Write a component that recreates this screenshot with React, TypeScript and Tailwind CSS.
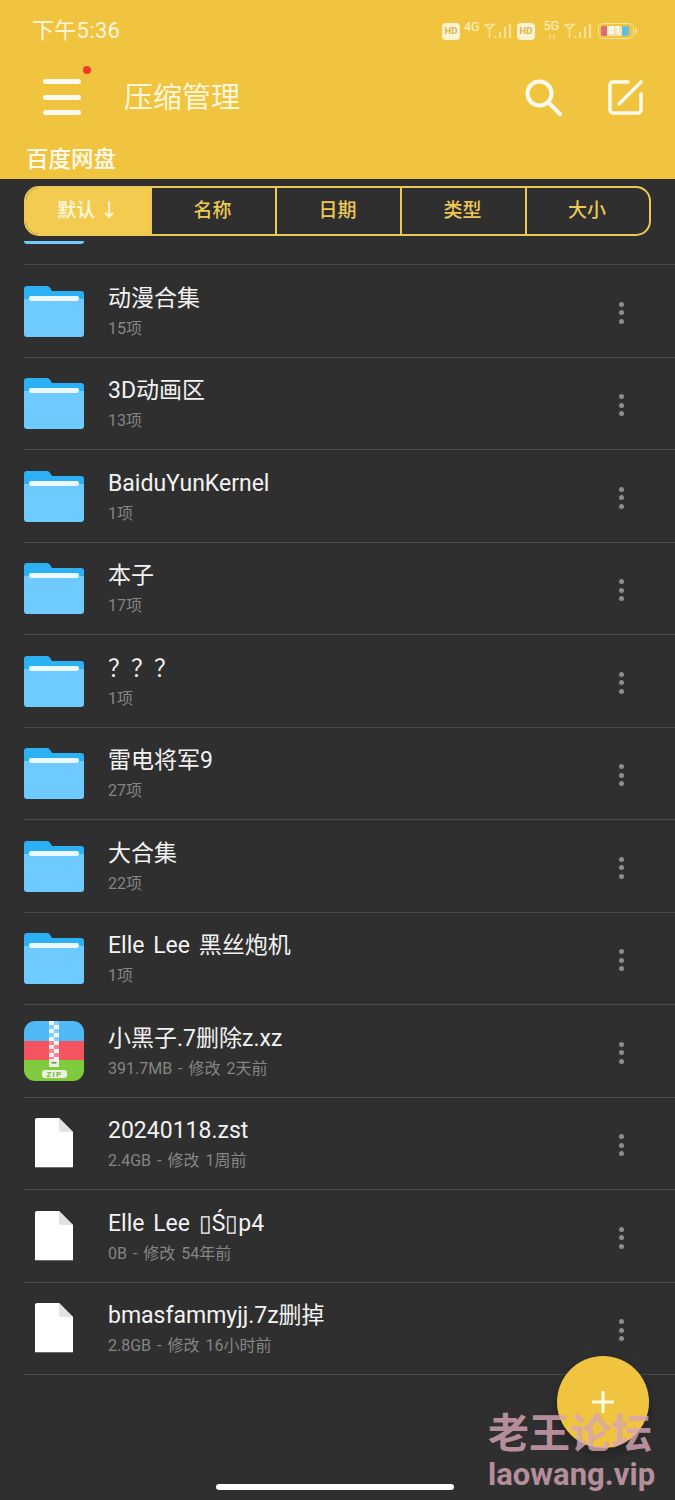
import React from 'react';

type Kind = 'folder' | 'zip' | 'file';

const rows: { name: React.ReactNode; sub: string; kind: Kind }[] = [
  { name: '动漫合集', sub: '15项', kind: 'folder' },
  { name: '3D动画区', sub: '13项', kind: 'folder' },
  { name: 'BaiduYunKernel', sub: '1项', kind: 'folder' },
  { name: '本子', sub: '17项', kind: 'folder' },
  { name: '？？？', sub: '1项', kind: 'folder' },
  { name: '雷电将军9', sub: '27项', kind: 'folder' },
  { name: '大合集', sub: '22项', kind: 'folder' },
  { name: 'Elle Lee 黑丝炮机', sub: '1项', kind: 'folder' },
  { name: '小黑子.7删除z.xz', sub: '391.7MB - 修改 2天前', kind: 'zip' },
  { name: '20240118.zst', sub: '2.4GB - 修改 1周前', kind: 'file' },
  { name: 'Elle Lee ▯Ś▯p4', sub: '0B - 修改 54年前', kind: 'file' },
  { name: 'bmasfammyjj.7z删掉', sub: '2.8GB - 修改 16小时前', kind: 'file' },
];

const tabs = ['默认 ↓', '名称', '日期', '类型', '大小'];

const FolderIcon = () => (
  <svg width="60" height="52" viewBox="0 0 60 52">
    <path d="M0 4a3 3 0 0 1 3-3h20a4 4 0 0 1 3.5 2.5L28 6h29a3 3 0 0 1 3 3v20H0z" fill="#2cb1f5" />
    <rect x="5" y="11" width="50" height="5" rx="2" fill="#eaf8ff" />
    <path d="M0 14h5v2h50v-2h5v35a3 3 0 0 1-3 3H3a3 3 0 0 1-3-3z" fill="#6fcbff" />
  </svg>
);

const ZipIcon = () => (
  <svg width="60" height="60" viewBox="0 0 60 60">
    <defs>
      <clipPath id="zipClip">
        <rect width="60" height="60" rx="11" />
      </clipPath>
    </defs>
    <g clipPath="url(#zipClip)">
      <rect width="60" height="21" fill="#4fb9f6" />
      <rect y="20" width="60" height="20" fill="#f4545f" />
      <rect y="39" width="60" height="21" fill="#7fcb3e" />
      {[0, 1, 2, 3, 4, 5, 6, 7, 8, 9].map((i) => (
        <g key={i}>
          <rect x={i % 2 ? 30 : 25} y={i * 4} width="5" height="4" fill="#fff" opacity="0.92" />
          <rect x={i % 2 ? 25 : 30} y={i * 4} width="5" height="4" fill="#fff" opacity="0.3" />
        </g>
      ))}
      <rect x="25" y="38" width="10" height="8" rx="1" fill="#e9f3e0" />
      <rect x="27.5" y="41" width="5" height="1.5" fill="#6a8d55" />
      <rect x="18" y="49" width="25" height="8" rx="3" fill="#e9f3e0" />
      <text x="30.5" y="56" textAnchor="middle" fontSize="7.5" fontWeight="700" letterSpacing="1.5" fill="#6fb23a" fontFamily="Liberation Sans, sans-serif">ZIP</text>
    </g>
  </svg>
);

const FileIcon = () => (
  <svg width="38" height="50" viewBox="0 0 38 50">
    <path d="M2 0h22l14 14v35H0V2a2 2 0 0 1 2-2z" fill="#fff" />
    <path d="M24 0l14 14H26a2 2 0 0 1-2-2z" fill="#e2e2e2" />
    <rect y="49" width="38" height="1" fill="#6a6a6a" />
  </svg>
);

const Signal = () => (
  <svg width="29" height="16" viewBox="0 0 29 16" fill="none" stroke="#f8e3a0" strokeWidth="1.5">
    <path d="M1 1.5h9L5.5 6zM5.5 4v11" />
    <path d="M11.5 15v-2M16 15v-6M21 15V4M26 15V1" strokeWidth="2" />
  </svg>
);

const HdBadge = () => (
  <div className="w-[18px] h-[17px] rounded-[4px] bg-[#fdf3d2] flex items-center justify-center text-[9.5px] font-bold leading-none text-[#d9b54a]">
    HD
  </div>
);

export default function App() {
  return (
    <div
      className="relative w-[675px] h-[1500px] overflow-hidden bg-[#2f2f2f] flex flex-col"
      style={{ fontFamily: 'Roboto, "Noto Sans CJK SC", sans-serif' }}
    >
      {/* Header */}
      <div className="h-[179px] bg-[#f0c43f] flex flex-col shrink-0 text-[#fdf6dc]">
        <div className="flex items-center justify-between pl-8 pr-[38px] pt-[17px]">
          <span className="text-[22px] leading-[28px] tracking-[0.3px]">下午5:36</span>
          <div className="flex items-center text-[12.5px] leading-none text-[#fdf3d2]">
            <HdBadge />
            <span className="ml-1 mb-2 w-[15px]">4G</span>
            <span className="ml-[5px]"><Signal /></span>
            <span className="ml-1"><HdBadge /></span>
            <span className="ml-[9px] w-[15px] flex flex-col items-center mb-[2px]">
              <span>5G</span>
              <svg width="8" height="6" viewBox="0 0 8 6" fill="none" stroke="#f8e3a0" strokeWidth="1" className="mt-[1px]">
                <path d="M2 0v5M0.5 3.5L2 5M6 6V1M4.5 2.5L6 1" />
              </svg>
            </span>
            <span className="ml-[5px]"><Signal /></span>
            <div className="ml-[5px] w-[36px] h-[16px] rounded-[5px] border border-[#f8e3a0] flex items-center p-[2px]">
              <div className="w-full h-full flex text-[11px] font-bold text-white leading-[10px]">
                <div className="w-[6px] bg-[#dd6b78] rounded-l-[2px]" />
                <div className="w-[15px] bg-[#f3e3b0] text-center">81</div>
                <div className="w-[7px] bg-[#62bfdc] rounded-r-[2px]" />
              </div>
            </div>
            <div className="ml-[1px] w-[2px] h-[6px] bg-[#f8e3a0] rounded-r-sm" />
          </div>
        </div>
        <div className="flex items-center pl-[43px] pr-[31px] mt-[22px] h-[60px]">
          <div className="relative w-[38px] flex flex-col gap-[10.5px]">
            <div className="h-[5px] rounded-full bg-[#fffaf0]" />
            <div className="h-[5px] rounded-full bg-[#fffaf0]" />
            <div className="h-[5px] rounded-full bg-[#fffaf0]" />
            <div className="absolute -right-[10px] -top-[13px] w-2 h-2 rounded-full bg-[#ee3b24]" />
          </div>
          <span className="ml-[43px] mt-[2px] text-[29px] leading-[40px]">压缩管理</span>
          <div className="ml-auto flex items-center gap-[46px]">
            <svg width="38" height="38" viewBox="0 0 38 38" fill="none" stroke="#fffaf0" strokeWidth="4" strokeLinecap="round">
              <circle cx="15.5" cy="15.5" r="12" />
              <path d="M24.5 24.5L36 36" />
            </svg>
            <svg width="36" height="36" viewBox="0 0 36 36" fill="none" stroke="#fffaf0" strokeWidth="3.5" strokeLinecap="round" strokeLinejoin="round">
              <path d="M20 3H5a3 3 0 0 0-3 3v25a3 3 0 0 0 3 3h25a3 3 0 0 0 3-3V15" />
              <path d="M11 25L33 3" />
            </svg>
          </div>
        </div>
        <div className="pl-[26px] mt-[18px] text-[22.5px] leading-[28px] font-medium text-[#fffaf0]">百度网盘</div>
      </div>

      {/* Sort tabs */}
      <div className="h-[62px] shrink-0 border-t border-[#26261f] px-6 pt-[6px]">
        <div className="grid grid-cols-[124px_125px_125px_125px_124px] h-[50px] w-[627px] rounded-[15px] border-2 border-[#ecc957] overflow-hidden">
          {tabs.map((t, i) => (
            <div
              key={t}
              className={
                i === 0
                  ? 'flex items-center justify-center bg-[#f2cb50] text-[#fff8e0] text-[19px] font-medium pt-[1px]'
                  : 'flex items-center justify-center border-l-2 pr-[2px] pt-[1px] border-[#ecc957] text-[#ecc957] text-[19px] font-medium'
              }
            >
              {t}
            </div>
          ))}
        </div>
      </div>

      {/* File list */}
      <div className="flex-1 overflow-hidden pl-6">
        <div className="h-[24px] relative overflow-hidden border-b border-[#4a4a4a]">
          <div className="w-[60px] h-[3px] bg-[#6fcbff] rounded-b-[3px]" />
        </div>
        {rows.map((r, i) => (
          <div key={i} className="h-[92.5px] flex items-center border-b border-[#4a4a4a]">
            <div className="w-[60px] flex justify-center shrink-0">
              {r.kind === 'folder' && <FolderIcon />}
              {r.kind === 'zip' && <ZipIcon />}
              {r.kind === 'file' && <FileIcon />}
            </div>
            <div className="ml-6 flex-1 min-w-0 mt-[1px]">
              <div className="text-[23px] leading-[32px] text-[#f2f2f2] [word-spacing:3px]">{r.name}</div>
              <div className="text-[16px] leading-[22px] mt-[3px] text-[#858585] [word-spacing:2px]">{r.sub}</div>
            </div>
            <div className="w-[5px] mr-[51px] flex flex-col gap-[3.5px] mt-[4px]">
              <div className="w-[5px] h-[5px] rounded-full bg-[#8d8d8d]" />
              <div className="w-[5px] h-[5px] rounded-full bg-[#8d8d8d]" />
              <div className="w-[5px] h-[5px] rounded-full bg-[#8d8d8d]" />
            </div>
          </div>
        ))}
      </div>

      {/* Add button */}
      <div className="absolute left-[557px] top-[1356px] w-[92px] h-[92px] rounded-full bg-[#f0c43f] shadow-[0_6px_14px_rgba(0,0,0,0.3)] flex items-center justify-center">
        <svg width="24" height="24" viewBox="0 0 24 24" stroke="#fffbe8" strokeWidth="3">
          <path d="M12 1v22M1 12h22" />
        </svg>
      </div>

      {/* Home indicator */}
      <div className="absolute left-[216px] top-[1484px] w-[238px] h-[6px] rounded-full bg-white" />

      {/* Watermark */}
      <div className="absolute left-[488px] top-[1412px] text-[#d7a6b6] opacity-80 font-bold">
        <div className="text-[41px] leading-[44px] whitespace-nowrap">老王论坛</div>
        <div className="text-[31px] leading-[38px] whitespace-nowrap">laowang.vip</div>
      </div>
    </div>
  );
}
